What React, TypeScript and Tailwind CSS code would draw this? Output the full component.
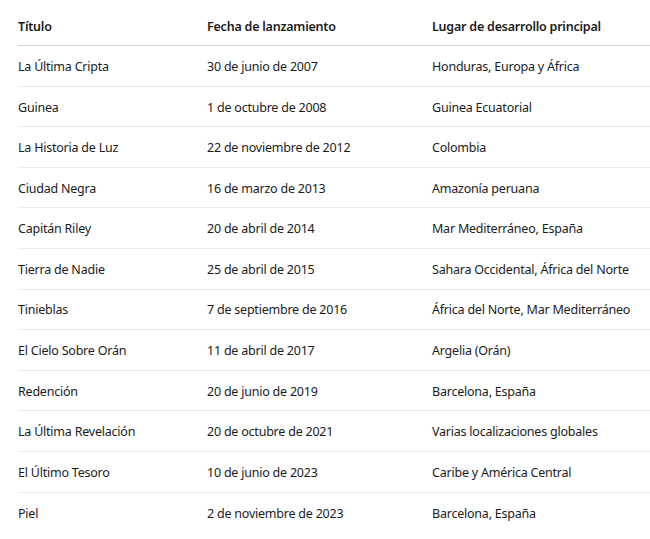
const rows: [string, string, string][] = [
  ["La Última Cripta", "30 de junio de 2007", "Honduras, Europa y África"],
  ["Guinea", "1 de octubre de 2008", "Guinea Ecuatorial"],
  ["La Historia de Luz", "22 de noviembre de 2012", "Colombia"],
  ["Ciudad Negra", "16 de marzo de 2013", "Amazonía peruana"],
  ["Capitán Riley", "20 de abril de 2014", "Mar Mediterráneo, España"],
  ["Tierra de Nadie", "25 de abril de 2015", "Sahara Occidental, África del Norte"],
  ["Tinieblas", "7 de septiembre de 2016", "África del Norte, Mar Mediterráneo"],
  ["El Cielo Sobre Orán", "11 de abril de 2017", "Argelia (Orán)"],
  ["Redención", "20 de junio de 2019", "Barcelona, España"],
  ["La Última Revelación", "20 de octubre de 2021", "Varias localizaciones globales"],
  ["El Último Tesoro", "10 de junio de 2023", "Caribe y América Central"],
  ["Piel", "2 de noviembre de 2023", "Barcelona, España"],
];

export default function App() {
  return (
    <div className="min-h-screen bg-white pt-[5px] pl-[18px] font-['Noto_Sans',sans-serif] text-[12.5px] tracking-[-0.22px] text-[#1b1b1b]">
      {/* header */}
      <div className="grid h-[41px] grid-cols-[189px_225px_1fr] items-center border-b border-[#d6d6d6] pt-[4px] font-semibold">
        <div>Título</div>
        <div>Fecha de lanzamiento</div>
        <div>Lugar de desarrollo principal</div>
      </div>
      {rows.map((r, i) => (
        <div
          key={i}
          className={
            "grid h-[40.6px] grid-cols-[189px_225px_1fr] items-center pt-[3px]" +
            (i < rows.length - 1 ? " border-b border-[#ececec]" : "")
          }
        >
          <div>{r[0]}</div>
          <div>{r[1]}</div>
          <div>{r[2]}</div>
        </div>
      ))}
    </div>
  );
}
